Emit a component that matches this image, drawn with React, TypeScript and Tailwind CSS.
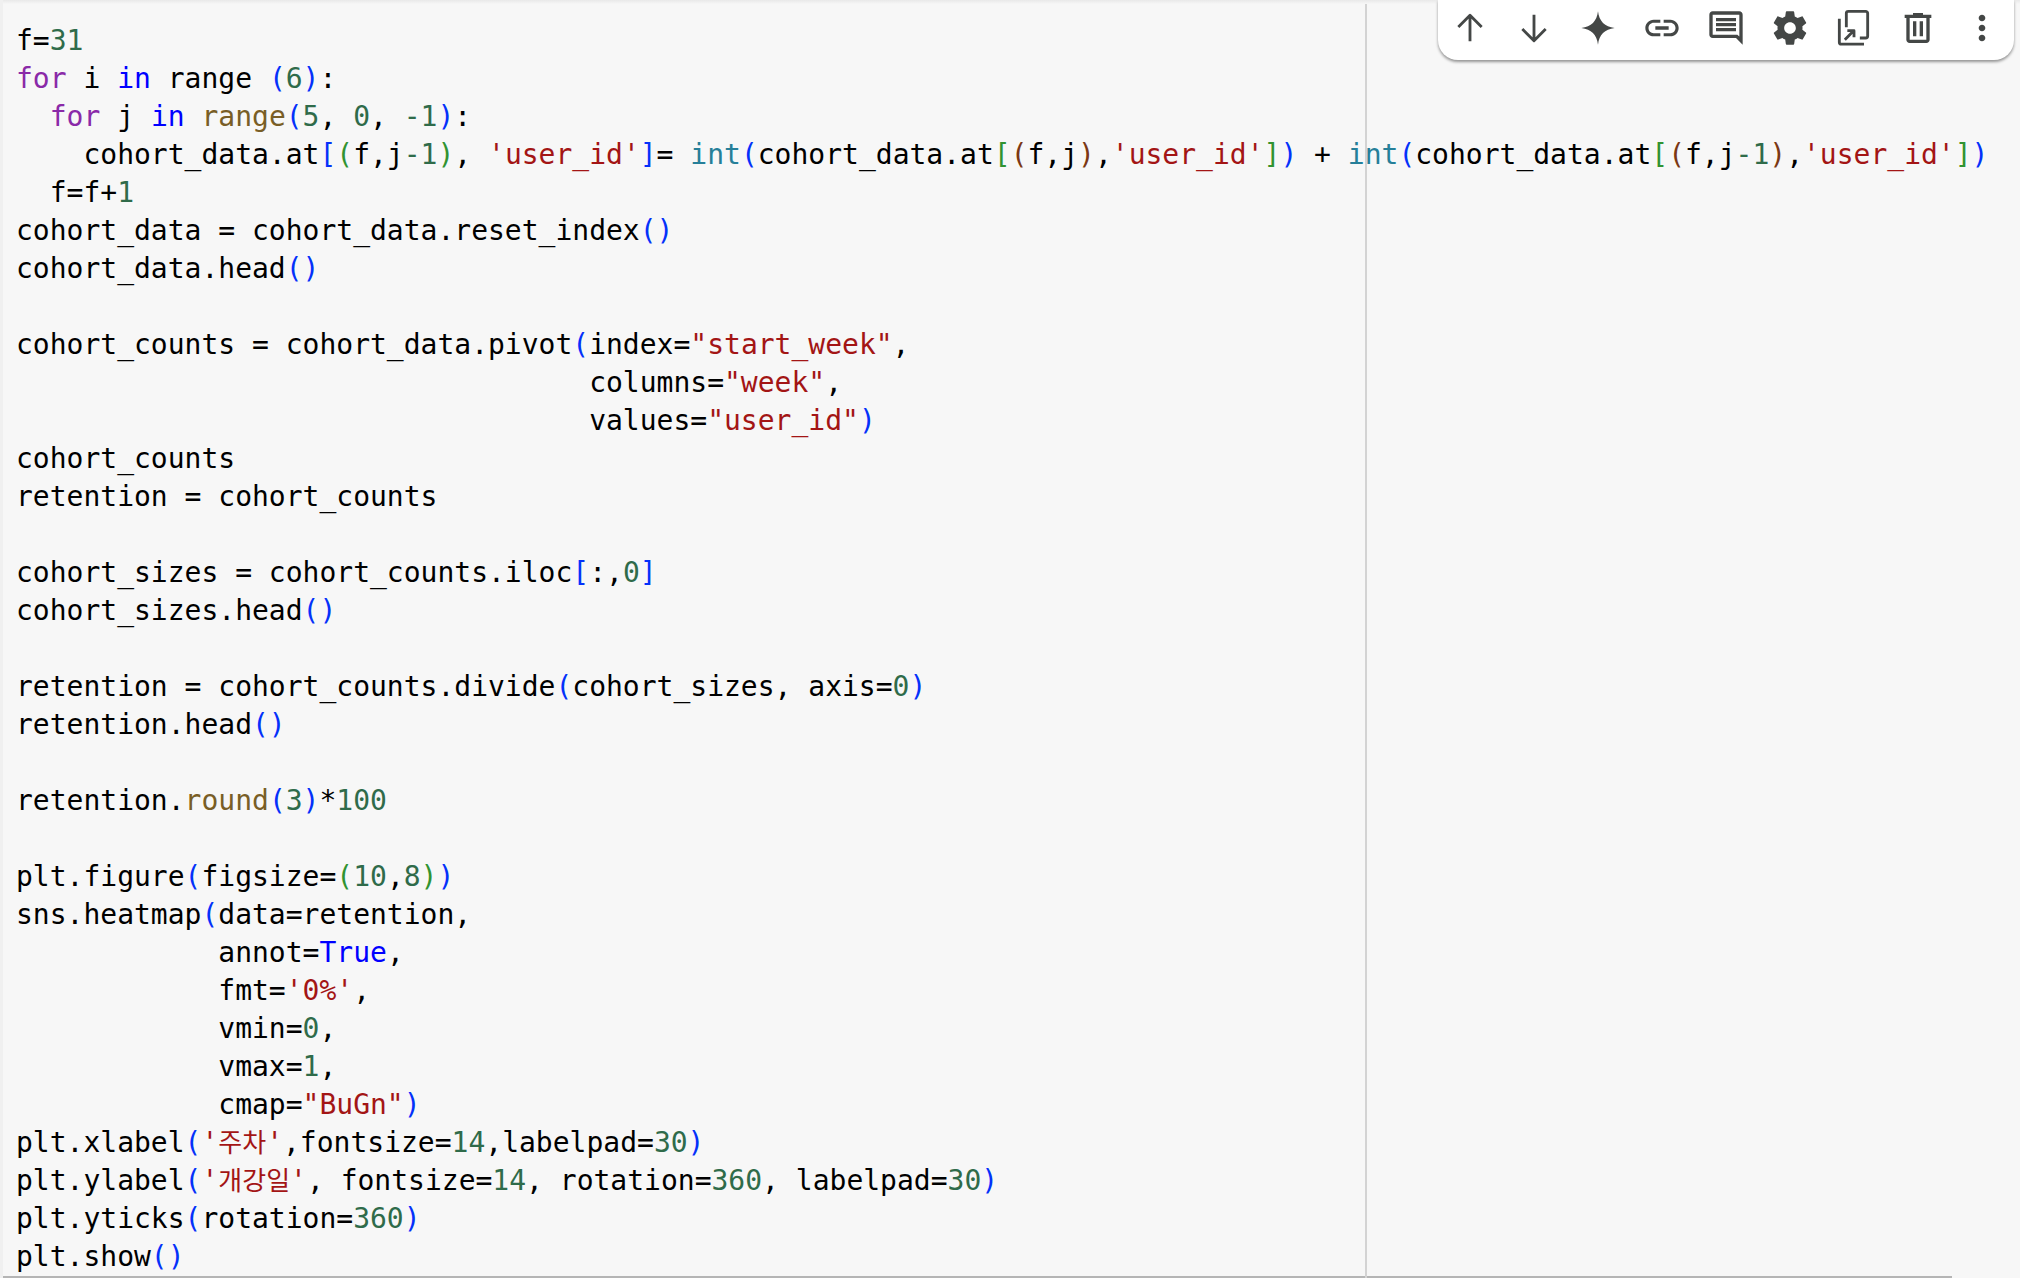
import React from "react";

type Kind = "t" | "kw" | "ctl" | "num" | "str" | "kr" | "fn" | "bi" | "b1" | "b2" | "b3";
type Seg = [string, Kind?];

const kindClass: Record<Kind, string> = {
	t: "text-black",
	kw: "text-[#0000ff]",
	ctl: "text-[#8a2aa8]",
	num: "text-[#2f6b4a]",
	str: "text-[#a31515]",
	kr: "text-[#a31515] text-[26px]",
	fn: "text-[#795e26]",
	bi: "text-[#267f99]",
	b1: "text-[#0431fa]",
	b2: "text-[#319331]",
	b3: "text-[#7b3814]",
};

const code: Seg[][] = [
	[["f="], ["31", "num"]],
	[["for", "ctl"], [" i "], ["in", "kw"], [" range "], ["(", "b1"], ["6", "num"], [")", "b1"], [":"]],
	[["  "], ["for", "ctl"], [" j "], ["in", "kw"], [" "], ["range", "fn"], ["(", "b1"], ["5", "num"], [", "], ["0", "num"], [", "], ["-1", "num"], [")", "b1"], [":"]],
	[
		["    cohort_data.at"], ["[", "b1"], ["(", "b2"], ["f,j"], ["-1", "num"], [")", "b2"], [", "], ["'user_id'", "str"], ["]", "b1"], ["= "],
		["int", "bi"], ["(", "b1"], ["cohort_data.at"], ["[", "b2"], ["(", "b3"], ["f,j"], [")", "b3"], [","], ["'user_id'", "str"], ["]", "b2"], [")", "b1"], [" + "],
		["int", "bi"], ["(", "b1"], ["cohort_data.at"], ["[", "b2"], ["(", "b3"], ["f,j"], ["-1", "num"], [")", "b3"], [","], ["'user_id'", "str"], ["]", "b2"], [")", "b1"],
	],
	[["  f=f+"], ["1", "num"]],
	[["cohort_data = cohort_data.reset_index"], ["()", "b1"]],
	[["cohort_data.head"], ["()", "b1"]],
	[],
	[["cohort_counts = cohort_data.pivot"], ["(", "b1"], ["index="], ['"start_week"', "str"], [","]],
	[["                                  columns="], ['"week"', "str"], [","]],
	[["                                  values="], ['"user_id"', "str"], [")", "b1"]],
	[["cohort_counts"]],
	[["retention = cohort_counts"]],
	[],
	[["cohort_sizes = cohort_counts.iloc"], ["[", "b1"], [":,"], ["0", "num"], ["]", "b1"]],
	[["cohort_sizes.head"], ["()", "b1"]],
	[],
	[["retention = cohort_counts.divide"], ["(", "b1"], ["cohort_sizes, axis="], ["0", "num"], [")", "b1"]],
	[["retention.head"], ["()", "b1"]],
	[],
	[["retention."], ["round", "fn"], ["(", "b1"], ["3", "num"], [")", "b1"], ["*"], ["100", "num"]],
	[],
	[["plt.figure"], ["(", "b1"], ["figsize="], ["(", "b2"], ["10", "num"], [","], ["8", "num"], [")", "b2"], [")", "b1"]],
	[["sns.heatmap"], ["(", "b1"], ["data=retention,"]],
	[["            annot="], ["True", "kw"], [","]],
	[["            fmt="], ["'0%'", "str"], [","]],
	[["            vmin="], ["0", "num"], [","]],
	[["            vmax="], ["1", "num"], [","]],
	[["            cmap="], ['"BuGn"', "str"], [")", "b1"]],
	[["plt.xlabel"], ["(", "b1"], ["'", "str"], ["주차", "kr"], ["'", "str"], [",fontsize="], ["14", "num"], [",labelpad="], ["30", "num"], [")", "b1"]],
	[["plt.ylabel"], ["(", "b1"], ["'", "str"], ["개강일", "kr"], ["'", "str"], [", fontsize="], ["14", "num"], [", rotation="], ["360", "num"], [", labelpad="], ["30", "num"], [")", "b1"]],
	[["plt.yticks"], ["(", "b1"], ["rotation="], ["360", "num"], [")", "b1"]],
	[["plt.show"], ["()", "b1"]],
];

const icons: { name: string; d: string; stroke?: boolean }[] = [
	{ name: "up", d: "M12 20V4.6M5 11.4l7-7 7 7", stroke: true },
	{ name: "down", d: "M12 4v15.4M5 12.6l7 7 7-7", stroke: true },
	{ name: "spark", d: "M12 2C12.7 8 16 11.3 22 12 16 12.7 12.7 16 12 22 11.3 16 8 12.7 2 12 8 11.3 11.3 8 12 2z" },
	{
		name: "link",
		d: "M3.9 12c0-1.71 1.39-3.1 3.1-3.1h4V7H7c-2.76 0-5 2.24-5 5s2.24 5 5 5h4v-1.9H7c-1.71 0-3.1-1.39-3.1-3.1zM8 13h8v-2H8v2zm9-6h-4v1.9h4c1.71 0 3.1 1.39 3.1 3.1s-1.39 3.1-3.1 3.1h-4V17h4c2.76 0 5-2.24 5-5s-2.24-5-5-5z",
	},
	{
		name: "comment",
		d: "M21.99 4c0-1.1-.89-2-1.99-2H4c-1.1 0-2 .9-2 2v12c0 1.1.9 2 2 2h14l4 4-.01-18zM20 4v13.17L18.83 16H4V4h16zM6 12h12v2H6zm0-3h12v2H6zm0-3h12v2H6z",
	},
	{
		name: "settings",
		d: "M19.43 12.98c.04-.32.07-.64.07-.98s-.03-.66-.07-.98l2.11-1.65c.19-.15.24-.42.12-.64l-2-3.46c-.12-.22-.39-.3-.61-.22l-2.49 1c-.52-.4-1.08-.73-1.69-.98l-.38-2.65C14.46 2.18 14.25 2 14 2h-4c-.25 0-.46.18-.49.42l-.38 2.65c-.61.25-1.17.59-1.69.98l-2.49-1c-.23-.09-.49 0-.61.22l-2 3.46c-.13.22-.07.49.12.64l2.11 1.65c-.04.32-.07.65-.07.98s.03.66.07.98l-2.11 1.65c-.19.15-.24.42-.12.64l2 3.46c.12.22.39.3.61.22l2.49-1c.52.4 1.08.73 1.69.98l.38 2.65c.03.24.24.42.49.42h4c.25 0 .46-.18.49-.42l.38-2.65c.61-.25 1.17-.59 1.69-.98l2.49 1c.23.09.49 0 .61-.22l2-3.46c.12-.22.07-.49-.12-.64l-2.11-1.65zM12 15.5c-1.93 0-3.5-1.57-3.5-3.5s1.57-3.5 3.5-3.5 3.5 1.57 3.5 3.5-1.57 3.5-3.5 3.5z",
	},
	{
		name: "mirror",
		d: "M7.4 11.5V3.2a1.2 1.2 0 0 1 1.2-1.2H19a1.2 1.2 0 0 1 1.2 1.2v13.6a1.2 1.2 0 0 1-1.2 1.2h-3.5M3.2 6.5v14a1.2 1.2 0 0 0 1.2 1.2H18M6.5 19l5-5M8 13.6h4v4",
		stroke: true,
	},
	{
		name: "delete",
		d: "M15 4V3H9v1H4v2h1v13c0 1.1.9 2 2 2h10c1.1 0 2-.9 2-2V6h1V4h-5zm2 15H7V6h10v13zM9 8h2v9H9zm4 0h2v9h-2z",
	},
	{
		name: "more",
		d: "M12 8c1.1 0 2-.9 2-2s-.9-2-2-2-2 .9-2 2 .9 2 2 2zm0 2c-1.1 0-2 .9-2 2s.9 2 2 2 2-.9 2-2-.9-2-2-2zm0 6c-1.1 0-2 .9-2 2s.9 2 2 2 2-.9 2-2-.9-2-2-2z",
	},
];

function Toolbar() {
	return (
		<div className="absolute top-0 left-[1438px] flex h-[60px] w-[576px] items-center rounded-b-[20px] bg-white pb-1 shadow-[0_2px_3px_rgba(0,0,0,0.4)]">
			{icons.map((icon) => (
				<div key={icon.name} className="flex w-16 flex-none justify-center">
					<svg viewBox="0 0 24 24" className="h-10 w-10 text-[#444746]">
						{icon.stroke ? (
							<path d={icon.d} fill="none" stroke="currentColor" strokeWidth="1.7" strokeLinecap="butt" strokeLinejoin="round" />
						) : (
							<path d={icon.d} fill="currentColor" />
						)}
					</svg>
				</div>
			))}
		</div>
	);
}

function App() {
	return (
		<div className="relative h-[1278px] w-[2020px] overflow-hidden bg-[#f7f7f7]">
			<div className="h-[1276px] pt-[22px] pl-4 font-['DejaVu_Sans_Mono','Noto_Sans_CJK_KR',monospace] text-[28px] leading-[38px] whitespace-pre">
				{code.map((line, i) => (
					<div key={i} className="h-[38px]">
						{line.map(([text, kind], j) => (
							<span key={j} className={kindClass[kind ?? "t"]}>
								{text}
							</span>
						))}
					</div>
				))}
			</div>
			<div className="h-0.5 w-[1952px] bg-[#b5b5b5]" />
			{/* ruler and the cell toolbar lie over the code */}
			<div className="absolute top-0 bottom-0 left-[1365px] w-0.5 bg-[#d3d3d3]" />
			<div className="absolute top-0 right-0 left-0 h-1 bg-gradient-to-b from-[#e9e9e9] to-[#f7f7f7]" />
			<div className="absolute top-0 bottom-0 left-0 w-[3px] bg-[#f0f0f0]" />
			<Toolbar />
		</div>
	);
}

export default App;
